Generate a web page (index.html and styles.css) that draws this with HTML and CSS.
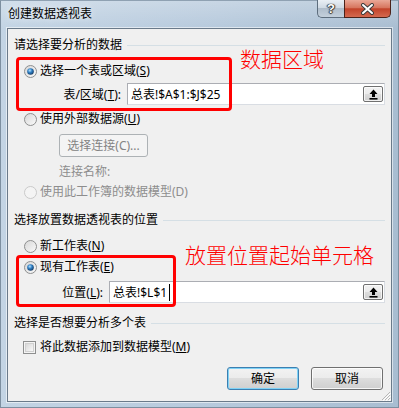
FILE: index.html
```html
<!DOCTYPE html>
<html lang="zh-CN">

<head>
  <meta charset="UTF-8">
  <title>创建数据透视表</title>
  <link rel="stylesheet" href="styles.css">
</head>

<body>
  <!-- gradientes usados pelos radios / checkbox -->
  <svg class="defs" width="0" height="0">
    <defs>
      <linearGradient id="boxFill" x1="0" y1="0" x2="1" y2="1">
        <stop offset="0" stop-color="#d6d6d6" />
        <stop offset="1" stop-color="#fbfbfb" />
      </linearGradient>
      <radialGradient id="dotFill" cx="0.4" cy="0.35" r="0.7">
        <stop offset="0" stop-color="#b6e4ff" />
        <stop offset="0.45" stop-color="#2f7fc4" />
        <stop offset="1" stop-color="#14365c" />
      </radialGradient>
    </defs>
  </svg>

  <div class="window">
    <!-- barra de titulo -->
    <div class="titlebar">
      <span class="title">创建数据透视表</span>
      <div class="caption-buttons">
        <div class="btn-help">?</div>
        <div class="btn-close">
          <svg width="13" height="12" viewBox="0 0 13 12">
            <path d="M2 2 L11 10 M11 2 L2 10" stroke="#3b3b3b" stroke-width="4" stroke-linecap="round" />
            <path d="M2 2 L11 10 M11 2 L2 10" stroke="#fff" stroke-width="2" stroke-linecap="round" />
          </svg>
        </div>
      </div>
    </div>

    <div class="client">
      <!-- dados -->
      <div class="group-title"><span>请选择要分析的数据</span><i class="rule"></i></div>

      <div class="option opt-first">
        <svg class="radio" width="13" height="13" viewBox="0 0 13 13">
          <circle cx="6.5" cy="6.5" r="6" fill="url(#boxFill)" stroke="#8e8f8f" />
          <circle cx="6.5" cy="6.5" r="3.3" fill="url(#dotFill)" />
        </svg>
        <span>选择一个表或区域(<u>S</u>)</span>
      </div>

      <div class="field-row">
        <span class="field-label">表/区域(<u>T</u>):</span>
        <div class="textbox">
          <span class="value">总表!$A$1:$J$25</span>
          <div class="pick-btn">
            <svg width="9" height="11" viewBox="0 0 9 11">
              <path d="M4.5 0.5 L8.5 5 L6 5 L6 8 L3 8 L3 5 L0.5 5 Z" fill="#000" />
              <rect x="0.5" y="9" width="8" height="1.6" fill="#000" />
            </svg>
          </div>
        </div>
      </div>

      <div class="option opt-ext">
        <svg class="radio" width="13" height="13" viewBox="0 0 13 13">
          <circle cx="6.5" cy="6.5" r="6" fill="url(#boxFill)" stroke="#8e8f8f" />
        </svg>
        <span>使用外部数据源(<u>U</u>)</span>
      </div>

      <div class="conn-btn">选择连接(C)...</div>
      <div class="conn-name">连接名称:</div>

      <div class="option opt-model disabled">
        <svg class="radio" width="13" height="13" viewBox="0 0 13 13">
          <circle cx="6.5" cy="6.5" r="6" fill="#f4f4f4" stroke="#c9c9c9" />
        </svg>
        <span>使用此工作簿的数据模型(D)</span>
      </div>

      <!-- local -->
      <div class="group-title gt-place"><span>选择放置数据透视表的位置</span><i class="rule"></i></div>

      <div class="option opt-new">
        <svg class="radio" width="13" height="13" viewBox="0 0 13 13">
          <circle cx="6.5" cy="6.5" r="6" fill="url(#boxFill)" stroke="#8e8f8f" />
        </svg>
        <span>新工作表(<u>N</u>)</span>
      </div>

      <div class="option opt-exist">
        <svg class="radio" width="13" height="13" viewBox="0 0 13 13">
          <circle cx="6.5" cy="6.5" r="6" fill="url(#boxFill)" stroke="#8e8f8f" />
          <circle cx="6.5" cy="6.5" r="3.3" fill="url(#dotFill)" />
        </svg>
        <span>现有工作表(<u>E</u>)</span>
      </div>

      <div class="field-row row-place">
        <span class="field-label label-place">位置(<u>L</u>):</span>
        <div class="textbox">
          <span class="value">总表!$L$1<i class="caret"></i></span>
          <div class="pick-btn">
            <svg width="9" height="11" viewBox="0 0 9 11">
              <path d="M4.5 0.5 L8.5 5 L6 5 L6 8 L3 8 L3 5 L0.5 5 Z" fill="#000" />
              <rect x="0.5" y="9" width="8" height="1.6" fill="#000" />
            </svg>
          </div>
        </div>
      </div>

      <!-- varias tabelas -->
      <div class="group-title gt-multi"><span>选择是否想要分析多个表</span><i class="rule"></i></div>

      <div class="option opt-check">
        <svg class="check" width="13" height="13" viewBox="0 0 13 13">
          <rect x="0.5" y="0.5" width="12" height="12" fill="#f4f4f4" stroke="#8e8f8f" />
          <rect x="2.5" y="2.5" width="8" height="8" fill="url(#boxFill)" stroke="#d0d0d0" />
        </svg>
        <span>将此数据添加到数据模型(<u>M</u>)</span>
      </div>

      <div class="actions">
        <div class="btn btn-default">确定</div>
        <div class="btn">取消</div>
      </div>

      <!-- anotacoes em vermelho por cima -->
      <div class="mark mark-data"></div>
      <div class="mark mark-place"></div>
      <div class="note note-data">数据区域</div>
      <div class="note note-place">放置位置起始单元格</div>

      <svg class="grip" width="11" height="11" viewBox="0 0 11 11">
        <path d="M10 2 L2 10 M10 5 L5 10 M10 8 L8 10" stroke="#b7b7b7" stroke-width="1" />
        <path d="M11 3 L3 11 M11 6 L6 11 M11 9 L9 11" stroke="#fff" stroke-width="1" />
      </svg>
    </div>
  </div>
</body>

</html>
```

FILE: styles.css
```css
/* dialogo estilo Windows 7 */
body {
  margin: 0;
  width: 399px;
  height: 408px;
  overflow: hidden;
  font-family: "Noto Sans", "Noto Sans CJK SC", sans-serif;
  font-size: 12px;
  color: #000;
}

.defs {
  display: block;
  width: 0;
  height: 0;
}

u {
  text-decoration: underline;
  text-underline-offset: 1px;
}

.window {
  width: 399px;
  height: 408px;
  box-sizing: border-box;
  background:
    linear-gradient(to bottom, rgba(255, 255, 255, 0.25), rgba(255, 255, 255, 0) 28px),
    linear-gradient(to right, #c3d4e4, #b6c9dc 55%, #a8bdd1);
  border: 1px solid #7d8fa0;
  border-top-color: #8fa1b2;
}

.titlebar {
  height: 27px;
  display: flex;
}

.title {
  padding: 5px 0 0 7px;
  line-height: 16px;
  text-shadow: 0 0 6px rgba(255, 255, 255, 0.9);
}

.caption-buttons {
  margin-left: auto;
  margin-right: 7px;
  display: flex;
  align-self: flex-start;
  margin-top: -1px;
}

.btn-help {
  width: 27px;
  height: 18px;
  box-sizing: border-box;
  border: 1px solid #5d6d7d;
  border-top: none;
  border-right: none;
  border-radius: 0 0 0 5px;
  background: linear-gradient(to bottom, #e9eff5, #d0dae4 45%, #afbdcb 50%, #c4d0dc);
  color: #fff;
  font-family: "Liberation Sans", sans-serif;
  font-weight: bold;
  font-size: 13px;
  line-height: 17px;
  text-align: center;
  text-shadow: 0 0 1px #333, 1px 0 1px #333, -1px 0 1px #333, 0 1px 1px #333;
}

.btn-close {
  width: 47px;
  height: 18px;
  box-sizing: border-box;
  border: 1px solid #4b2219;
  border-top: none;
  border-radius: 0 0 5px 0;
  background: linear-gradient(to bottom, #eaa897, #d7765f 45%, #c2432a 52%, #d4694f);
  display: flex;
  align-items: center;
  justify-content: center;
}

.client {
  position: relative;
  margin: 0 6px;
  height: 374px;
  box-sizing: border-box;
  border: 1px solid #6a7a8a;
  box-shadow: 0 0 0 1px rgba(255, 255, 255, 0.55);
  background: #f0f0f0;
  padding: 8px 6px 0;
}

/* titulos dos grupos */
.group-title {
  display: flex;
  align-items: center;
  height: 16px;
  line-height: 16px;
}

.group-title .rule {
  flex: 1;
  height: 1px;
  margin-left: 5px;
  background: #d5dfe5;
}

.gt-place {
  margin-top: 12px;
}

.gt-multi {
  margin-top: 12px;
}

/* radios */
.option {
  display: flex;
  align-items: center;
  gap: 3px;
  height: 16px;
  line-height: 16px;
  margin-left: 10px;
}

.option.disabled {
  color: #8d8d8d;
}

.opt-first {
  margin-top: 10px;
}

.opt-ext {
  margin-top: 6px;
}

.opt-model {
  margin-top: 4px;
}

.opt-new {
  margin-top: 10px;
}

.opt-exist {
  margin-top: 5px;
}

.opt-check {
  margin-top: 8px;
  margin-left: 9px;
  gap: 4px;
}

/* campos */
.field-row {
  display: flex;
  align-items: center;
  height: 22px;
  margin-top: 4px;
}

.row-place {
  margin-top: 6px;
}

.field-label {
  width: 113px;
  box-sizing: border-box;
  padding-right: 6px;
  text-align: right;
}

.label-place {
  width: 95px;
}

.textbox {
  flex: 1;
  height: 22px;
  box-sizing: border-box;
  border: 1px solid #abadb3;
  border-bottom-color: #d9dde3;
  border-right-color: #d9dde3;
  background: #fff;
  display: flex;
  align-items: center;
  padding-left: 3px;
}

.textbox .value {
  flex: 1;
  display: flex;
  align-items: center;
}

.caret {
  display: inline-block;
  width: 1px;
  height: 17px;
  margin-left: 2px;
  background: #000;
}

.pick-btn {
  width: 20px;
  height: 16px;
  margin-right: 1px;
  box-sizing: border-box;
  border: 1px solid #707070;
  border-radius: 2px;
  background: linear-gradient(to bottom, #f2f2f2, #ebebeb 50%, #dddddd 50%, #cfcfcf);
  box-shadow: inset 0 0 0 1px rgba(255, 255, 255, 0.7);
  display: flex;
  align-items: center;
  justify-content: center;
}

.conn-btn {
  width: 89px;
  height: 23px;
  margin: 7px 0 0 45px;
  box-sizing: border-box;
  border: 1px solid #adb2b5;
  border-radius: 3px;
  background: #f4f4f4;
  color: #838383;
  line-height: 21px;
  text-align: center;
}

.conn-name {
  margin: 7px 0 0 45px;
  height: 16px;
  line-height: 16px;
  color: #8d8d8d;
}

/* botoes */
.actions {
  display: flex;
  justify-content: flex-end;
  gap: 12px;
  margin-top: 12px;
  padding-right: 2px;
}

.btn {
  width: 72px;
  height: 23px;
  box-sizing: border-box;
  border: 1px solid #707070;
  border-radius: 3px;
  background: linear-gradient(to bottom, #f2f2f2, #ebebeb 50%, #dddddd 50%, #cfcfcf);
  box-shadow: inset 0 0 0 1px rgba(255, 255, 255, 0.8);
  line-height: 21px;
  text-align: center;
}

/* botao padrao com foco */
.btn-default {
  border-color: #3c7fb1;
  box-shadow: inset 0 0 0 1px #7fd2f6;
}

/* anotacoes */
.mark {
  position: absolute;
  box-sizing: border-box;
  border: 3px solid #ff0000;
  border-radius: 4px;
}

.mark-data {
  left: 8px;
  top: 28px;
  width: 216px;
  height: 54px;
}

.mark-place {
  left: 8px;
  top: 226px;
  width: 160px;
  height: 52px;
}

.note {
  position: absolute;
  color: #ff0000;
  font-family: "Noto Sans CJK SC", sans-serif;
  font-weight: 300;
  font-size: 21px;
  line-height: 24px;
  white-space: nowrap;
}

.note-data {
  left: 232px;
  top: 17px;
}

.note-place {
  left: 177px;
  top: 213px;
}

.grip {
  position: absolute;
  right: 0;
  bottom: 0;
}
```
